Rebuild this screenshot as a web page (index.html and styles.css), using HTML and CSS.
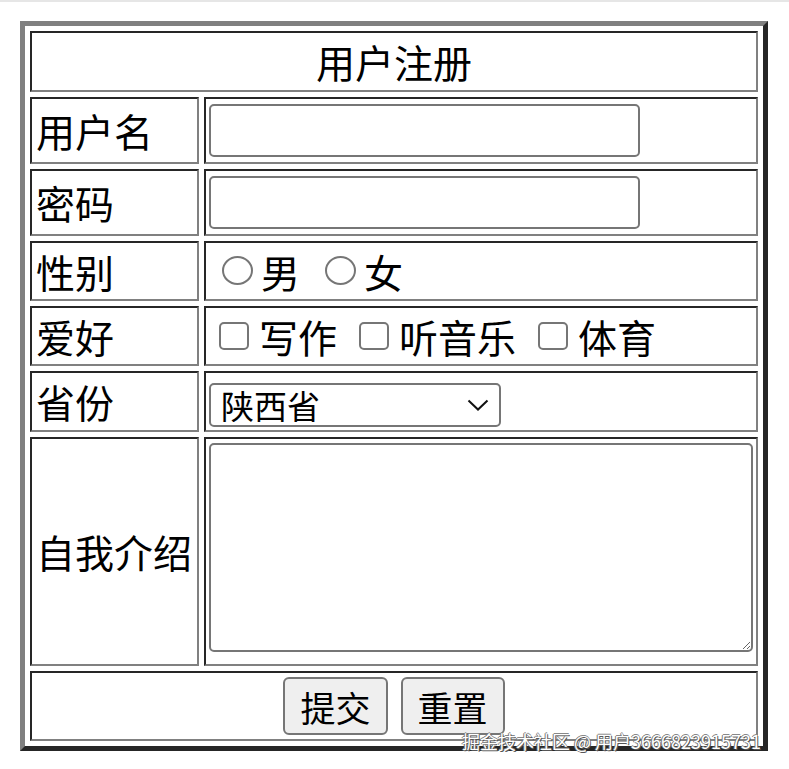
FILE: index.html
```html
<!DOCTYPE html>
<html lang="zh-CN">
<head>
    <meta charset="UTF-8">
    <meta name="viewport" content="width=device-width, initial-scale=1.0">
    <title>用户注册</title>
    <link rel="stylesheet" href="styles.css">
</head>
<body>
    <form id="regForm">
        <table class="reg">
            <tr class="row-title">
                <td colspan="2" class="title">用户注册</td>
            </tr>
            <tr class="row-text">
                <td class="label">用户名</td>
                <td class="field"><input type="text" name="username" class="text-input"></td>
            </tr>
            <tr class="row-text">
                <td class="label">密码</td>
                <td class="field"><input type="password" name="password" class="text-input"></td>
            </tr>
            <tr class="row-opt">
                <td class="label">性别</td>
                <td class="field">
                    <div class="opts radios">
                        <label class="opt"><input type="radio" name="sex" value="male">男</label>
                        <label class="opt"><input type="radio" name="sex" value="female">女</label>
                    </div>
                </td>
            </tr>
            <tr class="row-opt">
                <td class="label">爱好</td>
                <td class="field">
                    <div class="opts checks">
                        <label class="opt"><input type="checkbox" name="hobby" value="write">写作</label>
                        <label class="opt"><input type="checkbox" name="hobby" value="music">听音乐</label>
                        <label class="opt"><input type="checkbox" name="hobby" value="sport">体育</label>
                    </div>
                </td>
            </tr>
            <tr class="row-select">
                <td class="label">省份</td>
                <td class="field">
                    <span class="select-wrap">
                        <select name="province">
                            <option value="sx">陕西省</option>
                            <option value="sc">四川省</option>
                            <option value="hn">河南省</option>
                        </select>
                        <svg class="chevron" width="22" height="12" viewBox="0 0 22 12">
                            <path d="M1.5 1.5 L11 10.5 L20.5 1.5" fill="none" stroke="#111" stroke-width="2"/>
                        </svg>
                    </span>
                </td>
            </tr>
            <tr class="row-area">
                <td class="label">自我介绍</td>
                <td class="field area-cell"><textarea name="intro"></textarea></td>
            </tr>
            <tr class="row-actions">
                <td colspan="2">
                    <div class="actions">
                        <button type="submit">提交</button>
                        <button type="reset">重置</button>
                    </div>
                </td>
            </tr>
        </table>
    </form>

    <div class="watermark">掘金技术社区 @ 用户3666823915731</div>
</body>
</html>
```

FILE: styles.css
```css
body {
    margin: 0;
    border-top: 2px solid #e6e6e6;
    font-family: "Noto Sans CJK SC", "Noto Sans", sans-serif;
    color: #000;
    background: #fff;
}
.reg {
    box-sizing: border-box;
    width: 748px;
    margin: 19px 0 0 20px;
    border-style: solid;
    border-width: 5px;
    border-color: #808080 #262626 #262626 #808080;
    border-spacing: 5px 5.5px;
}
.reg td {
    box-sizing: border-box;
    border: 2px solid;
    border-color: #262626 #808080 #808080 #262626;
    padding: 0 3px;
    font-size: 39px;
    line-height: 1.2;
}
.reg td.label {
    width: 169px;
    padding: 0 4px;
    white-space: nowrap;
}
.title {
    text-align: center;
}
.row-title td {
    height: 61px;
}
.row-text td {
    height: 67px;
}
.row-opt td {
    height: 60px;
}
.row-select td {
    height: 61px;
}
.row-area td {
    height: 229px;
}
.row-actions td {
    height: 70px;
}
.text-input {
    display: block;
    box-sizing: border-box;
    width: 431px;
    height: 53px;
    border: 2px solid #767676;
    border-radius: 5px;
    font-size: 30px;
    padding: 0 8px;
    outline: none;
}
.opts {
    display: flex;
    align-items: center;
}
.radios {
    gap: 25px;
    padding-left: 13px;
}
.checks {
    gap: 22px;
    padding-left: 10px;
}
.opt {
    display: flex;
    align-items: center;
}
.radios .opt {
    gap: 8px;
}
.checks .opt {
    gap: 10px;
}
.opt input {
    appearance: none;
    margin: 0;
    box-sizing: border-box;
    border: 2px solid #767676;
    background: #fff;
}
.opt input[type="radio"] {
    width: 31px;
    height: 29px;
    border-radius: 50%;
}
.opt input[type="checkbox"] {
    width: 30px;
    height: 28px;
    border-radius: 5px;
}
.select-wrap {
    position: relative;
    display: inline-block;
    vertical-align: middle;
}
.select-wrap select {
    appearance: none;
    box-sizing: border-box;
    width: 292px;
    height: 44px;
    border: 2px solid #767676;
    border-radius: 5px;
    background: #fff;
    color: #000;
    font-family: inherit;
    font-size: 33px;
    line-height: 1;
    padding: 0 0 0 10px;
    display: block;
}
.chevron {
    position: absolute;
    right: 12px;
    top: 16px;
    pointer-events: none;
}
.reg td.area-cell {
    vertical-align: top;
    padding: 4px 3px 0;
}
.area-cell textarea {
    display: block;
    box-sizing: border-box;
    width: 544px;
    height: 209px;
    border: 2px solid #767676;
    border-radius: 5px;
    resize: both;
    font-size: 20px;
}
.actions {
    display: flex;
    justify-content: center;
    gap: 13px;
}
.actions button {
    box-sizing: border-box;
    height: 58px;
    padding: 0 15px;
    font-family: inherit;
    font-size: 35px;
    line-height: 1;
    color: #000;
    background: #efefef;
    border: 2px solid #767676;
    border-radius: 6px;
}
.watermark {
    position: absolute;
    left: 462px;
    top: 728px;
    font-size: 18px;
    color: #fff;
    white-space: nowrap;
    text-shadow: 1px 1px 0 #555, -1px 0 0 #777, 0 -1px 0 #888;
}
```
